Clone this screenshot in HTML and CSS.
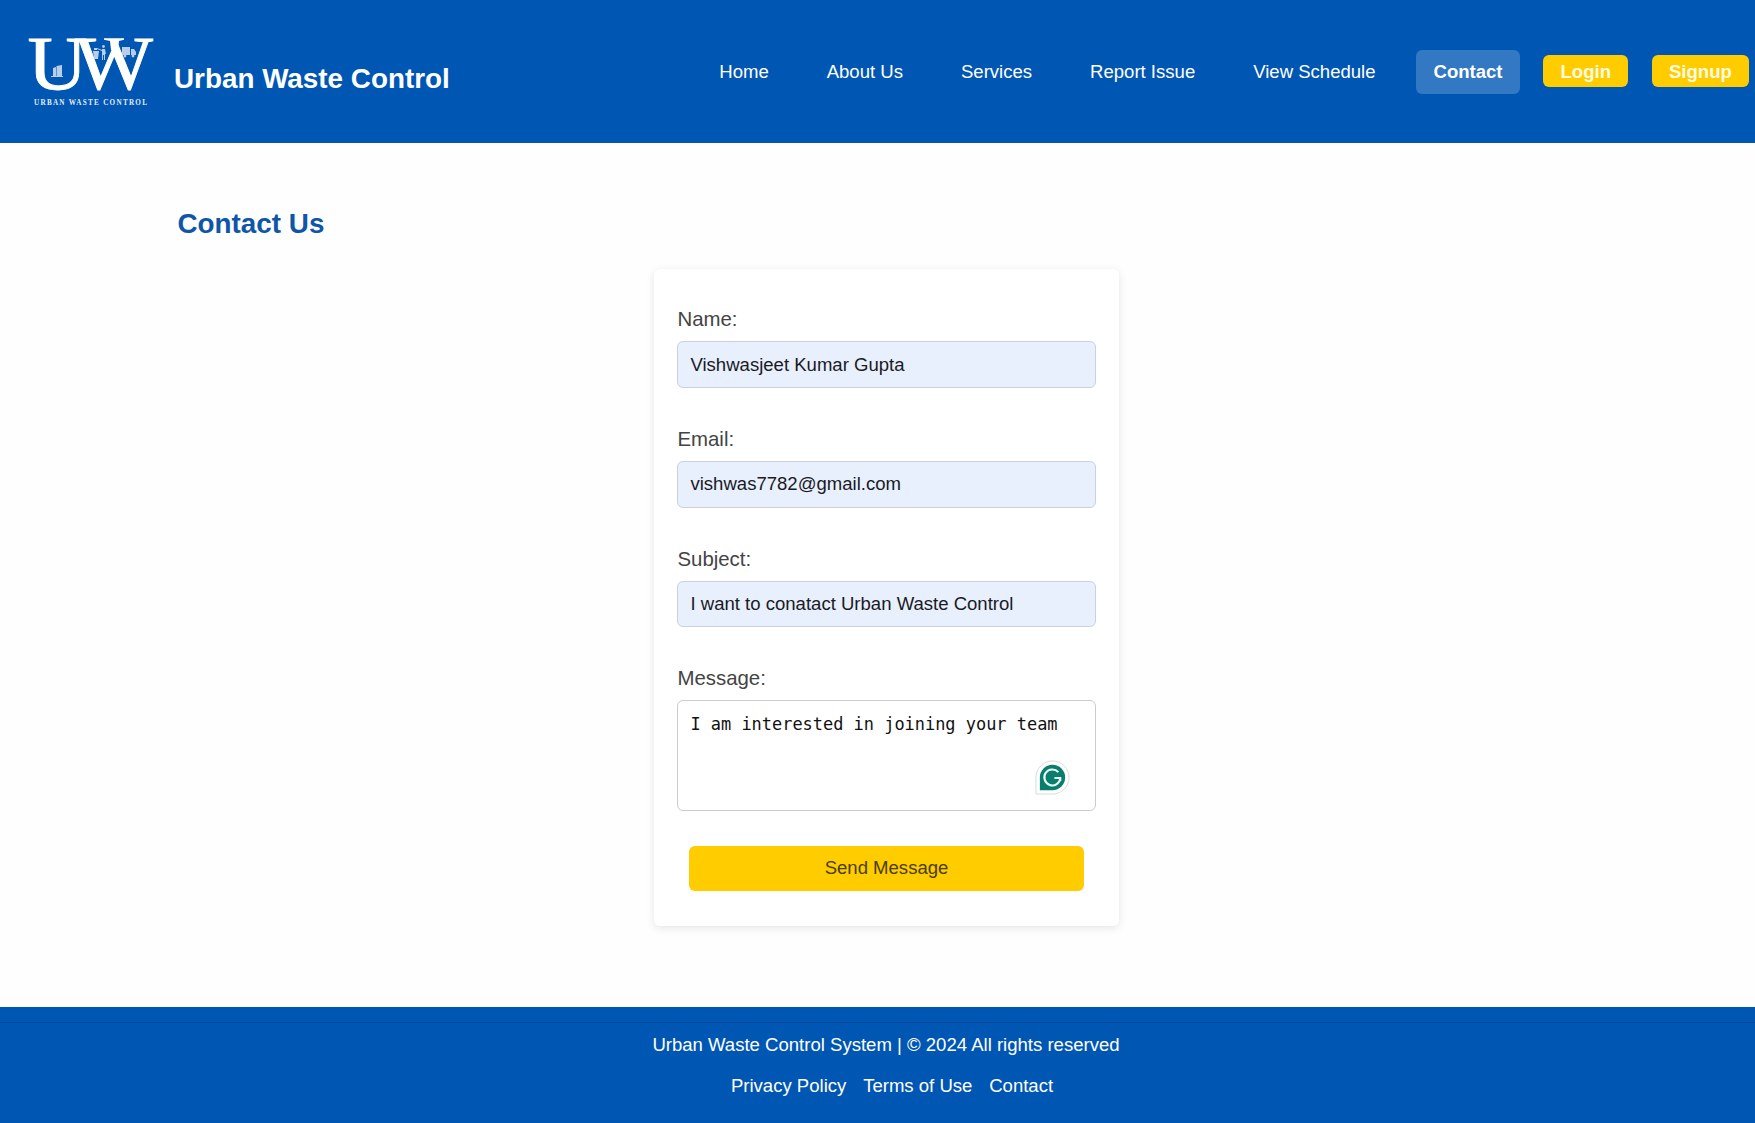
FILE: index.html
```html
<!DOCTYPE html>
<html lang="en">
<head>
<meta charset="utf-8">
<title>Urban Waste Control - Contact</title>
<link rel="stylesheet" href="styles.css">
</head>
<body>
<header class="header">
  <div class="brand">
    <svg class="logo" viewBox="0 0 140 80" role="img" aria-label="Urban Waste Control logo">
      <g class="logo-letters">
        <text x="7.500" y="61" textLength="60" lengthAdjust="spacingAndGlyphs">U</text>
        <text x="55" y="61" textLength="78" lengthAdjust="spacingAndGlyphs">W</text>
      </g>
      <path d="M84 10.200h20v1.500l-5 1.300l-1 9h-7l-1-9l-6-1.300z" fill="#fffffb"/>
      <g fill="#b9cde9">
        <path d="M33 48V40l3-1V48zM36.500 48V38l5.500-1V48z"/><path d="M31 49h12v-1H31z"/>
        <path d="M73 23h6l-1 8h-4zM74 20h3v2h-3z"/><circle cx="83.500" cy="18.500" r="1.400"/>
        <path d="M77 20l5 2v-1h3l1 5h-1v6h-1v-5h-1v5h-1v-9l-5-2z"/>
        <path d="M102 19h8v8h-8zM111 21h3l2 3v3h-5z"/><circle cx="105" cy="28" r="1.400"/><circle cx="113" cy="28" r="1.400"/>
      </g>
      <text class="logo-caption" x="14" y="76.500" textLength="113">URBAN WASTE CONTROL</text>
    </svg>
    <h1 class="title">Urban Waste Control</h1>
  </div>
  <nav class="nav">
    <a class="link">Home</a>
    <a class="link">About Us</a>
    <a class="link">Services</a>
    <a class="link">Report Issue</a>
    <a class="link">View Schedule</a>
    <a class="link active">Contact</a>
    <a class="auth">Login</a>
    <a class="auth">Signup</a>
  </nav>
</header>
<main class="main">
  <h2 class="heading">Contact Us</h2>
  <form class="card">
    <label class="label" for="name">Name:</label>
    <input class="field" id="name" type="text" value="Vishwasjeet Kumar Gupta">
    <label class="label" for="email">Email:</label>
    <input class="field" id="email" type="email" value="vishwas7782@gmail.com">
    <label class="label" for="subject">Subject:</label>
    <input class="field" id="subject" type="text" value="I want to conatact Urban Waste Control">
    <label class="label" for="message">Message:</label>
    <div class="message-wrap">
      <textarea class="field message" id="message" spellcheck="false">I am interested in joining your team</textarea>
      <svg class="assistant" viewBox="0 0 36 36">
        <path d="M1 35V18A17 17 0 1 1 18 35z" fill="#fff" stroke="#d6d9de"/>
        <path d="M5 31V18A13 13 0 1 1 18 31z" fill="#0b7d6c"/>
        <path d="M24 12.500A8.200 8.200 0 1 0 26 18.500H20M26 18.500V21.500" fill="none" stroke="#e8fffb" stroke-width="2.100"/>
      </svg>
    </div>
    <button class="send" type="button">Send Message</button>
  </form>
</main>
<footer class="footer">
  <div class="footer-inner">
    <p class="copy">Urban Waste Control System | © 2024 All rights reserved</p>
    <div class="footer-links"><a>Privacy Policy</a><a>Terms of Use</a><a>Contact</a></div>
  </div>
</footer>
</body>
</html>
```
FILE: styles.css
```css
* { box-sizing: border-box; }
html, body { height: 100%; }
body {
  margin: 0;
  display: flex;
  flex-direction: column;
  font: 18.56px/21px "Liberation Sans", Arial, sans-serif;
  color: #333;
  background: #fefefe;
  overflow: hidden;
}
.header {
  height: 142.500px;
  flex: none;
  display: flex;
  justify-content: space-between;
  align-items: center;
  padding: 0 5.800px 0 20px;
  background: #0056b3;
  color: #fff;
}
.brand { display: flex; align-items: center; }
.logo { width: 140px; height: 80px; margin-top: -7px; }
.logo-letters { font: 77px "Liberation Serif", serif; fill: #fffffb; stroke: #fffffb; stroke-width: .8; }
.logo-caption { font: bold 7.200px "Liberation Serif", serif; fill: #e4edf8; }
.title { margin: 15px 0 0 14px; font-size: 27.84px; line-height: 32px; }
.nav { display: flex; align-items: center; gap: 23.2px; white-space: nowrap; }
.link { padding: 11.4px 17.4px; border-radius: 6px; margin-top: 1px; }
.active { font-weight: bold; background: #3378c2; }
.auth {
  padding: 5.500px 17.4px 5.500px;
  border-radius: 6px;
  font-weight: bold;
  color: #fffbe0;
  background: #fc0;
}
.main { flex: none; height: 864.500px; padding: 65px 0 0 18px; }
.heading { margin: 0 0 29px 159.500px; font-size: 27.84px; line-height: 32px; color: #0f56a8; }
.card {
  width: 464.500px;
  height: 657px;
  margin: 0 auto;
  padding: 38.800px 23.2px 0;
  display: flex;
  flex-direction: column;
  border-radius: 6px;
  background: #fff;
  box-shadow: 0 2px 9px rgba(0, 0, 0, .1);
}
.label { font-size: 20.4px; line-height: 24px; margin-bottom: 10px; color: #444; }
.field {
  width: 100%;
  height: 46.700px;
  margin: 0 0 39px;
  padding: 0 12px;
  border: 1px solid #ccd0d8;
  border-radius: 6px;
  font: 18.56px "Liberation Sans", Arial, sans-serif;
  color: #1a1a1f;
  background: #e8f0fe;
}
.message-wrap { position: relative; }
.message {
  display: block;
  height: 110.500px;
  margin: 0;
  padding: 12px 12px;
  border-color: #ccc;
  resize: none;
  font: 16.95px/22px "DejaVu Sans Mono", monospace;
  color: #111;
  background: #fff;
}
.assistant { position: absolute; right: 26px; bottom: 16px; width: 35px; height: 35px; }
.send {
  height: 45px;
  margin: 35px 12px 0;
  padding: 0 0 1px;
  border: 0;
  border-radius: 6px;
  font: 18.56px "Liberation Sans", Arial, sans-serif;
  color: #4a3d08;
  background: #fc0;
}
.footer { flex: 1; padding-top: 15px; background: #0056b3; color: #fff; text-align: center; }
.footer-inner { border-top: 1px solid #00479a; padding: 11px 0 0 17px; }
.copy { margin: 0 0 20px; }
.footer-links { display: flex; justify-content: center; gap: 16.8px; padding-left: 12px; }
```
